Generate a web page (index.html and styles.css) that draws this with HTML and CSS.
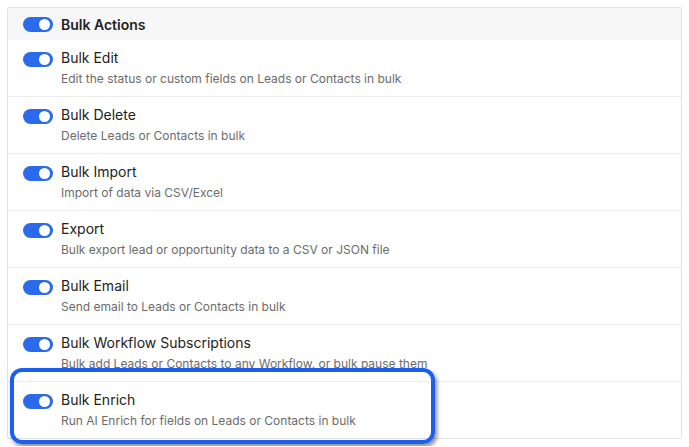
FILE: index.html
```html
<!DOCTYPE html>
<html lang="en">
<head>
    <meta charset="UTF-8">
    <title>Bulk Actions</title>
    <link rel="stylesheet" href="styles.css">
</head>
<body>

    <div class="panel">
        <div class="panel-header">
            <span class="toggle"></span>
            <span class="header-title">Bulk Actions</span>
        </div>

        <div class="row">
            <span class="toggle"></span>
            <div class="row-text">
                <div class="row-title">Bulk Edit</div>
                <div class="row-desc">Edit the status or custom fields on Leads or Contacts in bulk</div>
            </div>
        </div>

        <div class="row">
            <span class="toggle"></span>
            <div class="row-text">
                <div class="row-title">Bulk Delete</div>
                <div class="row-desc">Delete Leads or Contacts in bulk</div>
            </div>
        </div>

        <div class="row">
            <span class="toggle"></span>
            <div class="row-text">
                <div class="row-title">Bulk Import</div>
                <div class="row-desc">Import of data via CSV/Excel</div>
            </div>
        </div>

        <div class="row">
            <span class="toggle"></span>
            <div class="row-text">
                <div class="row-title">Export</div>
                <div class="row-desc">Bulk export lead or opportunity data to a CSV or JSON file</div>
            </div>
        </div>

        <div class="row">
            <span class="toggle"></span>
            <div class="row-text">
                <div class="row-title">Bulk Email</div>
                <div class="row-desc">Send email to Leads or Contacts in bulk</div>
            </div>
        </div>

        <div class="row">
            <span class="toggle"></span>
            <div class="row-text">
                <div class="row-title">Bulk Workflow Subscriptions</div>
                <div class="row-desc">Bulk add Leads or Contacts to any Workflow, or bulk pause them</div>
            </div>
        </div>

        <div class="row row-highlighted">
            <span class="toggle"></span>
            <div class="row-text">
                <div class="row-title">Bulk Enrich</div>
                <div class="row-desc">Run AI Enrich for fields on Leads or Contacts in bulk</div>
            </div>
            <!-- callout box drawn over the row -->
            <div class="highlight"></div>
        </div>
    </div>

</body>
</html>
```

FILE: styles.css
```css
body {
    margin: 0;
    background-color: #ffffff;
    font-family: Inter, "Noto Sans", Arial, sans-serif;
    color: #222;
}

.panel {
    margin: 7px;
    width: 675px;
    box-sizing: border-box;
    border: 1px solid #e2e2e2;
    border-radius: 2px;
}

.panel-header {
    display: flex;
    align-items: center;
    height: 32px;
    padding-left: 15px;
    background-color: #f7f7f7;
}

.header-title {
    margin-left: 8px;
    font-size: 14px;
    font-weight: 600;
    color: #222;
}

.toggle {
    position: relative;
    flex: none;
    width: 30px;
    height: 15px;
    border-radius: 8px;
    background-color: #2b6beb;
}

.toggle::after {
    content: "";
    position: absolute;
    top: 2px;
    right: 3px;
    width: 11px;
    height: 11px;
    border-radius: 50%;
    background-color: #ffffff;
}

.row {
    position: relative;
    display: flex;
    align-items: flex-start;
    height: 57px;
    padding: 12px 0 0 15px;
    box-sizing: border-box;
    border-bottom: 1px solid #ececec;
}

.row:last-child {
    height: 56px;
    border-bottom: none;
}

.row-text {
    margin-left: 8px;
    margin-top: -4px;
}

.row-title {
    font-size: 14px;
    line-height: 20px;
    color: #222;
}

.row-desc {
    margin-top: 3px;
    font-size: 12px;
    line-height: 16px;
    color: #6b6b6b;
}

.highlight {
    position: absolute;
    top: -14px;
    left: 2px;
    width: 425px;
    height: 76px;
    box-sizing: border-box;
    border: 4px solid #1c5ef2;
    border-radius: 12px;
    box-shadow: 2px 3px 4px rgba(0, 0, 0, 0.45);
}
```
